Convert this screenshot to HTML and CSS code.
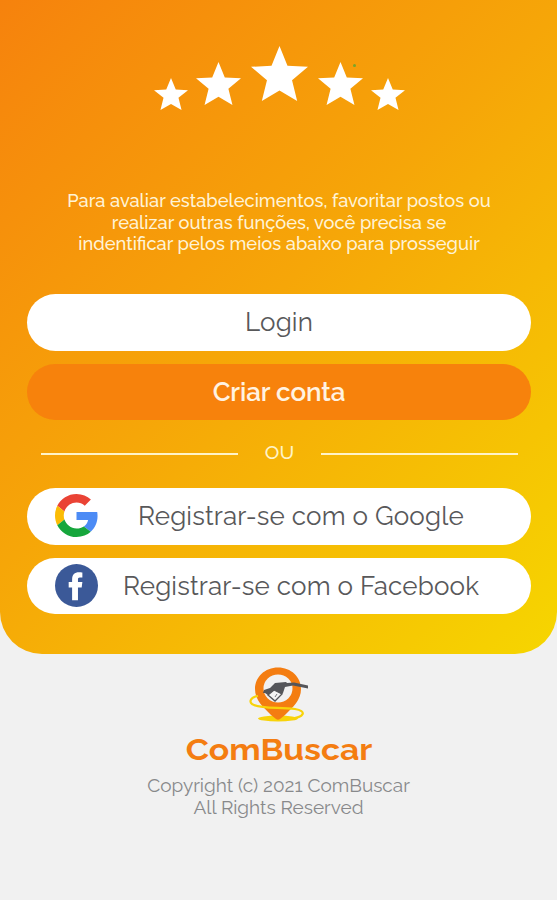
FILE: index.html
```
<!DOCTYPE html>
<html lang="pt-BR">
<head>
<meta charset="utf-8">
<title>ComBuscar</title>
<link rel="stylesheet" href="styles.css">
</head>
<body>
<svg class="defs" width="0" height="0" aria-hidden="true">
  <symbol id="star" viewBox="0 0 100 95" preserveAspectRatio="none"><path d="M50 0 64 34 100 36 72 59 81 95 50 77 19 95 28 59 0 36 36 34Z"/></symbol>
</svg>
<main class="panel">
  <div class="stars">
    <svg class="star small"><use href="#star"/></svg>
    <svg class="star medium"><use href="#star"/></svg>
    <svg class="star large"><use href="#star"/></svg>
    <span class="star-wrap"><svg class="star medium"><use href="#star"/></svg><i class="dot"></i></span>
    <svg class="star small"><use href="#star"/></svg>
  </div>
  <p class="message">Para avaliar estabelecimentos, favoritar postos ou<br>realizar outras funções, você precisa se<br>indentificar pelos meios abaixo para prosseguir</p>
  <button class="btn login"><span>Login</span></button>
  <button class="btn create"><span>Criar conta</span></button>
  <div class="divider"><span class="line"></span><span class="or">OU</span><span class="line"></span></div>
  <button class="btn social google">
    <svg class="icon" viewBox="0 0 48 48">
      <path fill="#ea4335" d="M24 9.500c3.540 0 6.710 1.220 9.210 3.600l6.850-6.850C35.900 2.380 30.470 0 24 0 14.620 0 6.510 5.380 2.560 13.220l7.980 6.190C12.430 13.720 17.740 9.500 24 9.500z"/>
      <path fill="#4c8bf5" d="M47.500 24.550c0-1.570-.15-3.090-.38-4.550H24v9.020h12.940c-.58 2.960-2.260 5.480-4.780 7.180l7.730 6c4.510-4.180 7.610-10.360 7.610-17.650z"/>
      <path fill="#fbbc05" d="M10.530 28.590A14.500 14.500 0 0 1 9.770 24c0-1.600.27-3.140.76-4.590l-7.980-6.190A23.900 23.900 0 0 0 0 24c0 3.880.92 7.540 2.560 10.780z"/>
      <path fill="#16a63c" d="M24 48c6.480 0 11.930-2.130 15.890-5.810l-7.730-6c-2.150 1.450-4.920 2.300-8.160 2.300-6.260 0-11.570-4.220-13.470-9.910l-7.980 6.190C6.510 42.620 14.620 48 24 48z"/>
    </svg>
    <span>Registrar-se com o Google</span>
  </button>
  <button class="btn social facebook">
    <svg class="icon" viewBox="0 0 44 44"><circle cx="22" cy="22" r="22" fill="#3b5998"/><path fill="#fff" d="M17.500 37V24h-3.500v-5.500h3.500V16c0-5 2.600-7.500 7-7.500 1.700 0 2.700.1 3.500.3v5h-2.500c-1.700 0-2 .9-2 2.200v2.500H28l-.7 5.500h-3.800v13z"/></svg>
    <span>Registrar-se com o Facebook</span>
  </button>
</main>
<footer class="footer">
  <svg class="logo" viewBox="0 0 60 56">
    <ellipse cx="29" cy="51.500" rx="20" ry="3" fill="#f8d30a"/>
    <path fill="#f47d11" fill-rule="evenodd" d="M29 .5C16 .5 6 10 6 22c0 11 8 18 16 26l5 4q2 1.300 4 0l5-4c8-8 16-15 16-26C52 10 42 .5 29 .5zM29 7.500a14.500 14 0 1 1 0 28 14.500 14 0 0 1 0-28z"/>
    <path fill="none" stroke="#f8d30a" stroke-width="2.200" d="M9 29C1 30-1 36 5 38c9 4 26 2 41 4 12 2 10 8-5 10"/>
    <path fill="#55565a" d="m15 23 6-2 5-5 11-1 1 1 7-.5 14 3v3l-15-3-8 1.500-2 6-8 7-10-7-2 0z"/>
    <path fill="#f5f5f5" stroke="#55565a" stroke-width="1.300" d="m25 23 8 4-7 7-7-6z"/>
    <path fill="none" stroke="#77787c" d="m28 27-2 3"/>
  </svg>
  <h1 class="brand">ComBuscar</h1>
  <p class="copyright">Copyright (c) 2021 ComBuscar<br>All Rights Reserved</p>
</footer>
</body>
</html>
```
FILE: styles.css
```
* { box-sizing: border-box; }
body {
  margin: 0;
  min-height: 900px;
  background: #f1f1f1;
  font-family: Raleway, Lato, sans-serif;
}
.defs { display: block; height: 0; }
.panel {
  height: 654px;
  padding: 46px 26px 0 27px;
  border-radius: 0 0 42px 42px;
  background: linear-gradient(135deg, #f6820d 0%, #f6a608 47%, #f6d600 100%);
  display: flex;
  flex-direction: column;
}
.stars {
  display: flex;
  justify-content: center;
  align-items: flex-start;
  gap: 9px;
  height: 144px;
  fill: #fff;
}
.star { display: block; flex: none; }
.small { width: 34px; height: 32px; margin-top: 32px; }
.medium { width: 45px; height: 43px; margin-top: 16px; }
.stars > .medium { margin-left: -1px; margin-right: 1px; }
.large { width: 57px; height: 55px; }
.star-wrap { position: relative; left: 1px; }
.dot {
  position: absolute;
  left: 35px;
  top: 18px;
  width: 3px;
  height: 3px;
  border-radius: 50%;
  background: #76a52b;
}
.message {
  margin: 0 0 39px;
  height: 65px;
  color: #fff3d6;
  font-size: 18.3px;
  font-weight: 500;
  line-height: 21.5px;
  text-align: center;
  white-space: nowrap;
}
.btn {
  display: flex;
  align-items: center;
  justify-content: center;
  flex: none;
  width: 100%;
  height: 57px;
  padding: 0 0 1px;
  margin: 0 0 13px;
  border: 0;
  border-radius: 29px;
  background: #fff;
  color: #58585a;
  font: 400 26px Raleway, Lato, sans-serif;
  letter-spacing: .16px;
  white-space: nowrap;
}
.create {
  height: 56px;
  padding-bottom: 0;
  margin-bottom: 19px;
  background: #f7820c;
  color: #fff3e2;
  font-weight: 600;
  letter-spacing: -.1px;
}
.divider {
  display: flex;
  align-items: center;
  justify-content: space-between;
  height: 26px;
  margin: 0 13px 23px 14px;
}
.line { width: 197px; height: 2px; margin-top: 4px; background: #fff3c8; }
.or { color: #fff3c8; font-size: 19.5px; font-weight: 500; }
.social { justify-content: flex-start; padding-left: 28px; padding-bottom: 2px; }
.icon { width: 43px; height: 43px; flex: none; }
.google span { margin-left: 40px; }
.facebook { height: 56px; margin-bottom: 0; padding-bottom: 1px; }
.facebook span { margin-left: 25px; }
.footer { display: flex; flex-direction: column; align-items: center; padding-top: 13px; }
.logo { width: 60px; height: 56px; }
.brand {
  margin: 8px 0 6px;
  color: #f47d11;
  font-size: 30px;
  line-height: 38px;
  font-weight: 700;
  transform: scaleX(1.125);
}
.copyright {
  margin: 0;
  color: #88898b;
  font-size: 19px;
  line-height: 21.5px;
  text-align: center;
}
```
